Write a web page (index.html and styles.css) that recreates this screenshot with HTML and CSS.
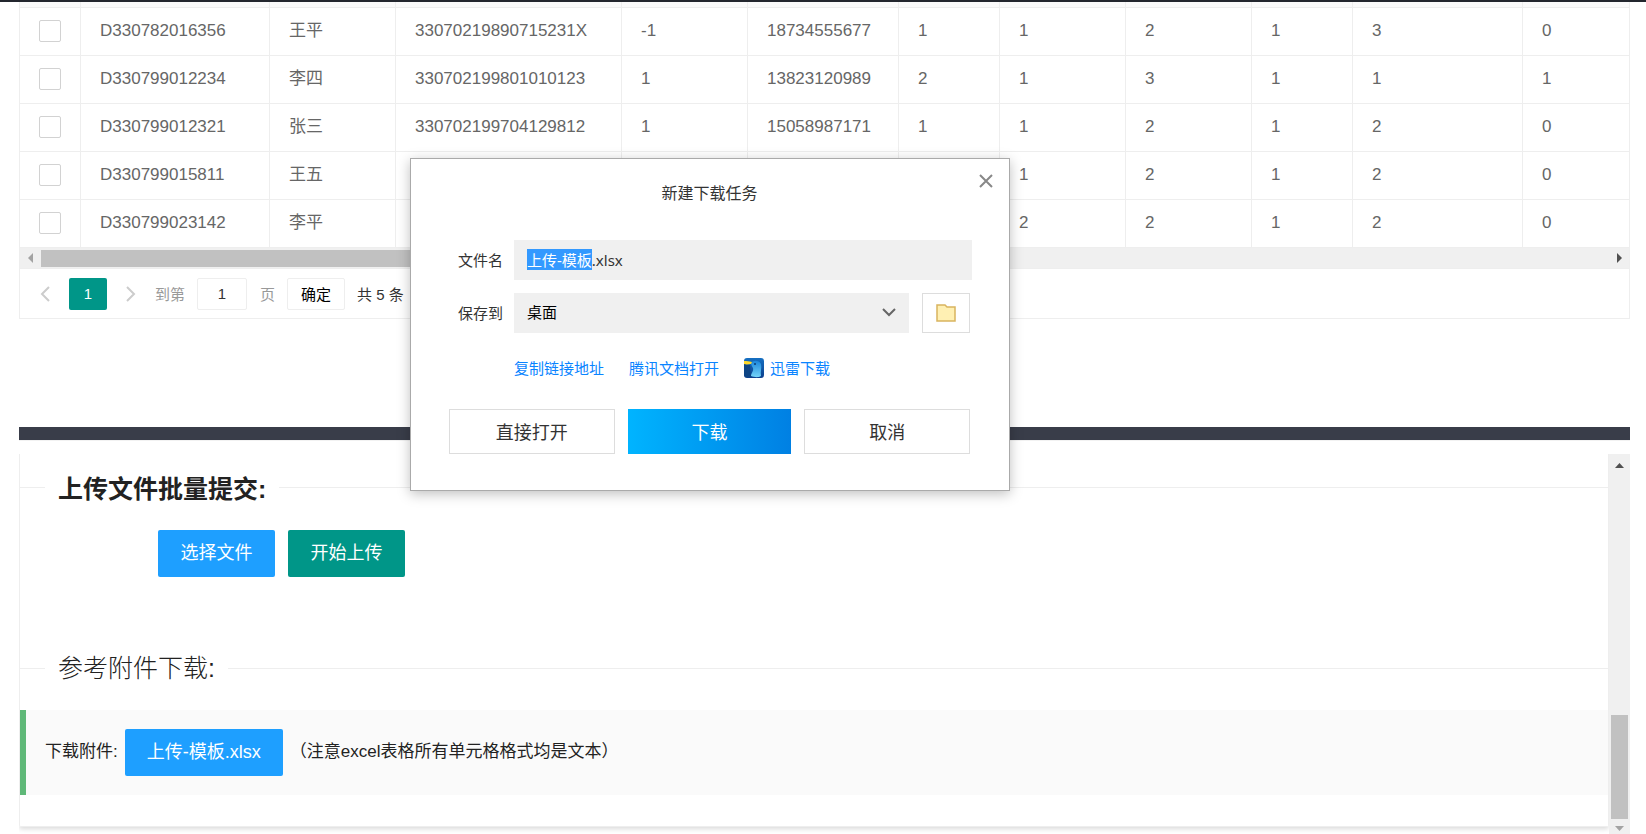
FILE: index.html
```html
<!DOCTYPE html>
<html lang="zh-CN">
<head>
<meta charset="utf-8">
<title>批量上传</title>
<link rel="stylesheet" href="styles.css">
</head>
<body>
<div class="topbar"></div>
<main class="page">
  <section class="grid">
    <table class="data">
      <colgroup>
        <col class="c-check"><col class="c-code"><col class="c-mid"><col class="c-id"><col class="c-mid"><col class="c-phone">
        <col class="c-small"><col class="c-mid"><col class="c-mid"><col class="c-small"><col class="c-wide"><col>
      </colgroup>
      <thead><tr><th></th><th></th><th></th><th></th><th></th><th></th><th></th><th></th><th></th><th></th><th></th><th></th></tr></thead>
      <tbody>
        <tr><td><input type="checkbox" class="check" aria-label="选择 王平"></td><td>D330782016356</td><td>王平</td><td>33070219890715231X</td><td>-1</td><td>18734555677</td><td>1</td><td>1</td><td>2</td><td>1</td><td>3</td><td>0</td></tr>
        <tr><td><input type="checkbox" class="check" aria-label="选择 李四"></td><td>D330799012234</td><td>李四</td><td>330702199801010123</td><td>1</td><td>13823120989</td><td>2</td><td>1</td><td>3</td><td>1</td><td>1</td><td>1</td></tr>
        <tr><td><input type="checkbox" class="check" aria-label="选择 张三"></td><td>D330799012321</td><td>张三</td><td>330702199704129812</td><td>1</td><td>15058987171</td><td>1</td><td>1</td><td>2</td><td>1</td><td>2</td><td>0</td></tr>
        <tr><td><input type="checkbox" class="check" aria-label="选择 王五"></td><td>D330799015811</td><td>王五</td><td></td><td></td><td></td><td></td><td>1</td><td>2</td><td>1</td><td>2</td><td>0</td></tr>
        <tr><td><input type="checkbox" class="check" aria-label="选择 李平"></td><td>D330799023142</td><td>李平</td><td></td><td></td><td></td><td></td><td>2</td><td>2</td><td>1</td><td>2</td><td>0</td></tr>
      </tbody>
    </table>
    <div class="hscroll">
      <svg class="arrow" viewBox="0 0 21 20"><path d="M8 10l5-5v10z" fill="#a3a3a3"/></svg>
      <div class="hthumb"></div>
      <svg class="arrow" viewBox="0 0 21 20"><path d="M14 10l-5-5v10z" fill="#505050"/></svg>
    </div>
    <nav class="pager">
      <button class="step" aria-label="上一页"><svg viewBox="0 0 10 16"><path d="M9 1L2 8l7 7" /></svg></button>
      <button class="current">1</button>
      <button class="step" aria-label="下一页"><svg viewBox="0 0 10 16"><path d="M1 1l7 7-7 7" /></svg></button>
      <label class="muted" for="pageno">到第</label>
      <input id="pageno" class="pageno" value="1">
      <span class="muted">页</span>
      <button class="confirm">确定</button>
      <span class="total">共 5 条</span>
    </nav>
  </section>

  <div class="divider"></div>

  <section class="lower">
    <div class="panel">
      <fieldset class="title title-bold"><legend>上传文件批量提交:</legend></fieldset>
      <div class="actions">
        <button class="btn blue">选择文件</button>
        <button class="btn green">开始上传</button>
      </div>
      <fieldset class="title title-light"><legend>参考附件下载:</legend></fieldset>
      <div class="quote">
        <span>下载附件:</span>
        <a class="btn blue" href="#">上传-模板.xlsx</a>
        <span>（注意excel表格所有单元格格式均是文本）</span>
      </div>
    </div>
    <div class="vscroll">
      <svg class="varrow" viewBox="0 0 21 21"><path d="M6 14h9l-4.500-5z" fill="#505050"/></svg>
      <div class="vthumb"></div>
      <svg class="varrow varrow-end" viewBox="0 0 21 15"><path d="M6 7h9l-4.500 5z" fill="#a3a3a3"/></svg>
    </div>
  </section>
</main>

<div class="dialog" role="dialog" aria-labelledby="dlg-title">
  <button class="close" aria-label="关闭"><svg viewBox="0 0 14 14"><path d="M1 1l12 12M13 1L1 13"/></svg></button>
  <h2 class="dlg-title" id="dlg-title">新建下载任务</h2>
  <div class="field">
    <label for="fname">文件名</label>
    <input id="fname" class="fname" value="上传-模板.xlsx">
  </div>
  <div class="field">
    <label for="dest">保存到</label>
    <div class="select-wrap">
      <select id="dest" class="dest"><option>桌面</option></select>
      <svg class="caret" viewBox="0 0 14 9"><path d="M1 1l6 6 6-6"/></svg>
    </div>
    <button class="folder" aria-label="浏览文件夹"><svg viewBox="0 0 20 18"><path d="M1 1h8l2 2h8v14H1z" fill="#fff0b3" stroke="#d9b45f" stroke-width="1.500"/></svg></button>
  </div>
  <div class="links">
    <a href="#">复制链接地址</a>
    <a href="#">腾讯文档打开</a>
    <a href="#" class="thunder">
      <svg viewBox="0 0 20 20">
        <defs>
          <linearGradient id="sky" x1="0" y1="0" x2="0" y2="1"><stop offset="0" stop-color="#1670c2"/><stop offset="1" stop-color="#0b3f8c"/></linearGradient>
          <linearGradient id="bird" x1="0" y1="0" x2="0" y2="1"><stop offset="0" stop-color="#1a86dc"/><stop offset="1" stop-color="#74d4f8"/></linearGradient>
        </defs>
        <rect width="20" height="20" rx="3" fill="url(#sky)"/>
        <path d="M0 6l6 1 1 12H3a3 3 0 0 1-3-3z" fill="#0d4484"/>
        <path d="M7 5c2-3 8-3 10 1 1 4-1 8 0 12-3 2-7 1-10 0 0-3 3-5 2-8-1-2-2-3-2-5z" fill="url(#bird)"/>
        <path d="M0 3c3 0 5 0 8 1l-1 2c-2 0-4 1-7 0z" fill="#ffd829"/>
        <circle cx="11" cy="6" r="1" fill="#083c78"/>
      </svg>
      <span>迅雷下载</span>
    </a>
  </div>
  <div class="choices">
    <button class="choice">直接打开</button>
    <button class="choice primary">下载</button>
    <button class="choice">取消</button>
  </div>
</div>
<script src="main.js"></script>
</body>
</html>
```
FILE: main.js
```js
// Preselect the base name so it can be retyped without touching the extension.
var field = document.getElementById('fname');
field.focus();
field.setSelectionRange(0, field.value.lastIndexOf('.'));
```
FILE: styles.css
```css
* { box-sizing: border-box; }
body {
  margin: 0;
  background: #fff;
  color: #222;
  font-family: "Liberation Sans", "Noto Sans CJK SC", sans-serif;
  font-size: 17px;
}
button, input, select { font: inherit; margin: 0; }
button { cursor: pointer; }
a { text-decoration: none; }
svg { display: block; }

.topbar { height: 2px; background: #23262e; }
.page { padding: 0 16px 0 19px; }

.grid { border: 1px solid #eee; border-top: 0; }
.data { width: 100%; table-layout: fixed; border-collapse: separate; border-spacing: 0; color: #666; }
.c-check { width: 61px; }
.c-code { width: 189px; }
.c-mid { width: 126px; }
.c-id { width: 226px; }
.c-phone { width: 151px; }
.c-small { width: 101px; }
.c-wide { width: 170px; }
.data th { height: 6px; padding: 0; background: #fafafa; border: 0 solid #eee; border-width: 0 1px 1px 0; }
.data td { height: 48px; padding: 0 0 1px 19px; border: 0 solid #eee; border-width: 0 1px 1px 0; line-height: 22px; white-space: nowrap; }
.data th:last-child, .data td:last-child { border-right: 0; }
.check { appearance: none; display: block; width: 22px; height: 22px; border: 1px solid #d2d2d2; border-radius: 2px; background: #fff; }

.hscroll { display: flex; height: 20px; background: #f0f0f0; }
.arrow { width: 21px; height: 20px; }
.hthumb { width: 50%; margin: 2px auto 1px 0; background: #c1c1c1; }

.pager { display: flex; align-items: center; height: 50px; padding-left: 20px; border-top: 1px solid #eee; font-size: 15px; }
.step { padding: 0; border: 0; background: none; }
.step svg { width: 10px; height: 16px; fill: none; stroke: #ccc; stroke-width: 2; }
.current { width: 38px; height: 32px; margin: 0 19px; padding: 0; border: 0; border-radius: 2px; background: #009688; color: #fff; }
.muted { color: #999; }
label.muted { margin: 0 12px 0 19px; }
.pageno { width: 50px; height: 32px; margin-right: 13px; padding: 0; border: 1px solid #eee; border-radius: 2px; color: #333; text-align: center; }
.confirm { width: 58px; height: 32px; margin: 0 12px; padding: 0; border: 1px solid #eee; border-radius: 2px; background: #fff; color: #000; }
.total { color: #333; }

.divider { height: 14px; margin: 108px 0 13px; background: #393d49; border-bottom: 1px solid #f2f2f2; }

.lower { display: flex; height: 380px; }
.panel { flex: 1; height: 373px; padding-top: 17px; border: 1px solid #eee; border-top: 0; border-radius: 0 0 2px 2px; box-shadow: 0 2px 5px rgba(0, 0, 0, .15); clip-path: inset(0 0 -7px 0); }
.title { margin: 0; padding: 0; border: 0; border-top: 1px solid #eee; font-size: 25px; line-height: 33px; }
.title legend { margin-left: 25px; padding: 0 13px; }
.title-bold { font-weight: 700; line-height: 29px; }
.title-bold legend { padding-top: 4px; }
.title-light { font-weight: 300; }
.actions { display: flex; gap: 13px; margin: 26px 0 75px 138px; }
.actions .btn { width: 117px; }
.btn { height: 47px; padding: 0 22px; border: 0; border-radius: 2px; color: #fff; font-size: 18px; line-height: 47px; white-space: nowrap; }
.blue { background: #1e9fff; }
.green { background: #009688; }
.quote { display: flex; align-items: center; margin-top: 25px; padding: 19px; border-left: 6px solid #5fb878; background: #fafafa; }
.quote span { padding-bottom: 6px; }
.quote .btn { margin: 0 7px; }

.vscroll { display: flex; flex-direction: column; width: 21px; background: #f0f0f0; }
.varrow { width: 21px; height: 21px; margin-bottom: auto; }
.vthumb { width: 17px; height: 104px; margin: 0 auto; background: #c1c1c1; }
.varrow-end { height: 15px; margin: 0; }

.dialog {
  position: absolute;
  top: 158px;
  left: 410px;
  width: 600px;
  padding: 24px 39px 36px 38px;
  border: 1px solid #aaa;
  background: #fff;
  box-shadow: 0 3px 12px rgba(0, 0, 0, .25);
  color: #333;
  font-family: "Noto Sans", "Noto Sans CJK SC", sans-serif;
  font-size: 15px;
}
.close { position: absolute; top: 15px; right: 16px; padding: 0; border: 0; background: none; }
.close svg { width: 14px; height: 14px; stroke: #888; stroke-width: 2; fill: none; }
.dlg-title { margin: 0 0 37px; font-size: 16px; font-weight: 400; line-height: 20px; text-align: center; }
.field { display: flex; align-items: center; height: 40px; margin-bottom: 13px; padding-left: 9px; }
.field label { width: 56px; padding-bottom: 2px; white-space: nowrap; }
.fname { flex: 1; min-width: 0; height: 40px; margin-right: -2px; padding: 0 13px 2px; border: 0; outline: 0; background: #f0f0f0; color: #333; }
.fname::selection { background: #39f; color: #fff; }
.select-wrap { position: relative; flex: 1; }
.dest { appearance: none; display: block; width: 100%; height: 40px; padding: 0 13px 2px; border: 0; border-radius: 0; background: #f0f0f0; color: #000; }
.caret { position: absolute; top: 15px; right: 13px; width: 14px; height: 9px; fill: none; stroke: #666; stroke-width: 2; pointer-events: none; }
.folder { display: flex; align-items: center; justify-content: center; width: 48px; height: 40px; margin-left: 13px; padding: 0; border: 1px solid #ddd; background: #fff; }
.folder svg { width: 20px; height: 18px; }
.links { display: flex; align-items: center; gap: 25px; height: 20px; margin: 25px 0 31px 65px; }
.links a { color: #0a84ff; line-height: 20px; }
.thunder { display: flex; gap: 6px; }
.thunder svg { width: 20px; height: 20px; }
.choices { display: flex; gap: 13px; }
.choice { flex: 1; height: 45px; padding: 0 0 2px; border: 1px solid #ddd; background: #fff; color: #333; font-size: 18px; }
.primary { border: 0; background: linear-gradient(90deg, #00b4ff, #0080e3); color: #fff; }
```
